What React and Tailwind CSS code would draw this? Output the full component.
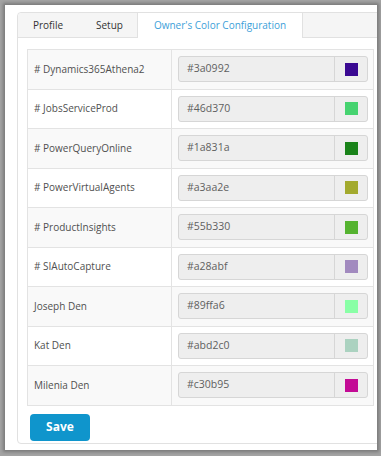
import React from 'react';

const rows = [
  { name: '# Dynamics365Athena2', color: '#3a0992' },
  { name: '# JobsServiceProd', color: '#46d370' },
  { name: '# PowerQueryOnline', color: '#1a831a' },
  { name: '# PowerVirtualAgents', color: '#a3aa2e' },
  { name: '# ProductInsights', color: '#55b330' },
  { name: '# SIAutoCapture', color: '#a28abf' },
  { name: 'Joseph Den', color: '#89ffa6' },
  { name: 'Kat Den', color: '#abd2c0' },
  { name: 'Milenia Den', color: '#c30b95' },
];

const ColorRow = ({ name, color, striped }) => (
  <div className={`flex h-[39.5px] border-b border-[#e3e3e3] ${striped ? 'bg-[#f9f9f9]' : 'bg-white'}`}>
    <div className="w-[144px] shrink-0 flex items-center pl-[6px] border-r border-[#e3e3e3] text-[10px] text-[#505050]">
      {name}
    </div>
    <div className="flex-1 flex items-center pl-[6px] pr-[6px]">
      <div className="flex w-[190px] h-[26px] rounded-[3px] border border-[#d6d6d6] bg-[#eeeeee]">
        <div className="flex-1 flex items-center pl-[8px] text-[10.5px] text-[#5f5f5f]">{color}</div>
        <div className="w-[33px] flex items-center justify-center border-l border-[#d6d6d6]">
          <div className="w-[13px] h-[13px]" style={{ backgroundColor: color }} />
        </div>
      </div>
    </div>
  </div>
);

export default function App() {
  return (
    <div
      className="w-[381px] h-[456px] bg-[#a3a3a3] pl-[5px] pt-[5px] pr-[4px] pb-[6px]"
      style={{ fontFamily: '"Open Sans", "Liberation Sans", sans-serif' }}
    >
      <div className="w-full h-full bg-white overflow-hidden shadow-[0_0_3px_2px_rgba(0,0,0,0.25)] pl-[12px] pt-[7px]">
        <div className="w-[368px] h-[432px] border border-[#e1e1e1] rounded-[4px] bg-white">
          {/* tabs */}
          <div className="flex h-[25px] bg-[#f5f5f5] border-b border-[#e1e1e1] rounded-t-[4px] text-[10px]">
            <div className="w-[63px] flex items-center pl-[15px] text-[#333]">Profile</div>
            <div className="w-[56px] flex items-center pl-[15px] text-[#333]">Setup</div>
            <div className="w-[166px] h-[26px] -mt-px flex items-center justify-center bg-white border border-b-0 border-[#e1e1e1] text-[#3d9fd9]">
              Owner's Color Configuration
            </div>
          </div>

          <div className="pl-[9px] pt-[11px]">
            <div className="w-[347px] border border-b-0 border-[#e3e3e3]">
              {rows.map((r, i) => (
                <ColorRow key={r.name} name={r.name} color={r.color} striped={i % 2 === 0} />
              ))}
            </div>

            <button className="mt-[8px] ml-[3px] w-[60px] h-[27px] rounded-[4px] bg-[#0f95cc] text-white text-[12px] font-bold">
              Save
            </button>
          </div>
        </div>
      </div>
    </div>
  );
}
